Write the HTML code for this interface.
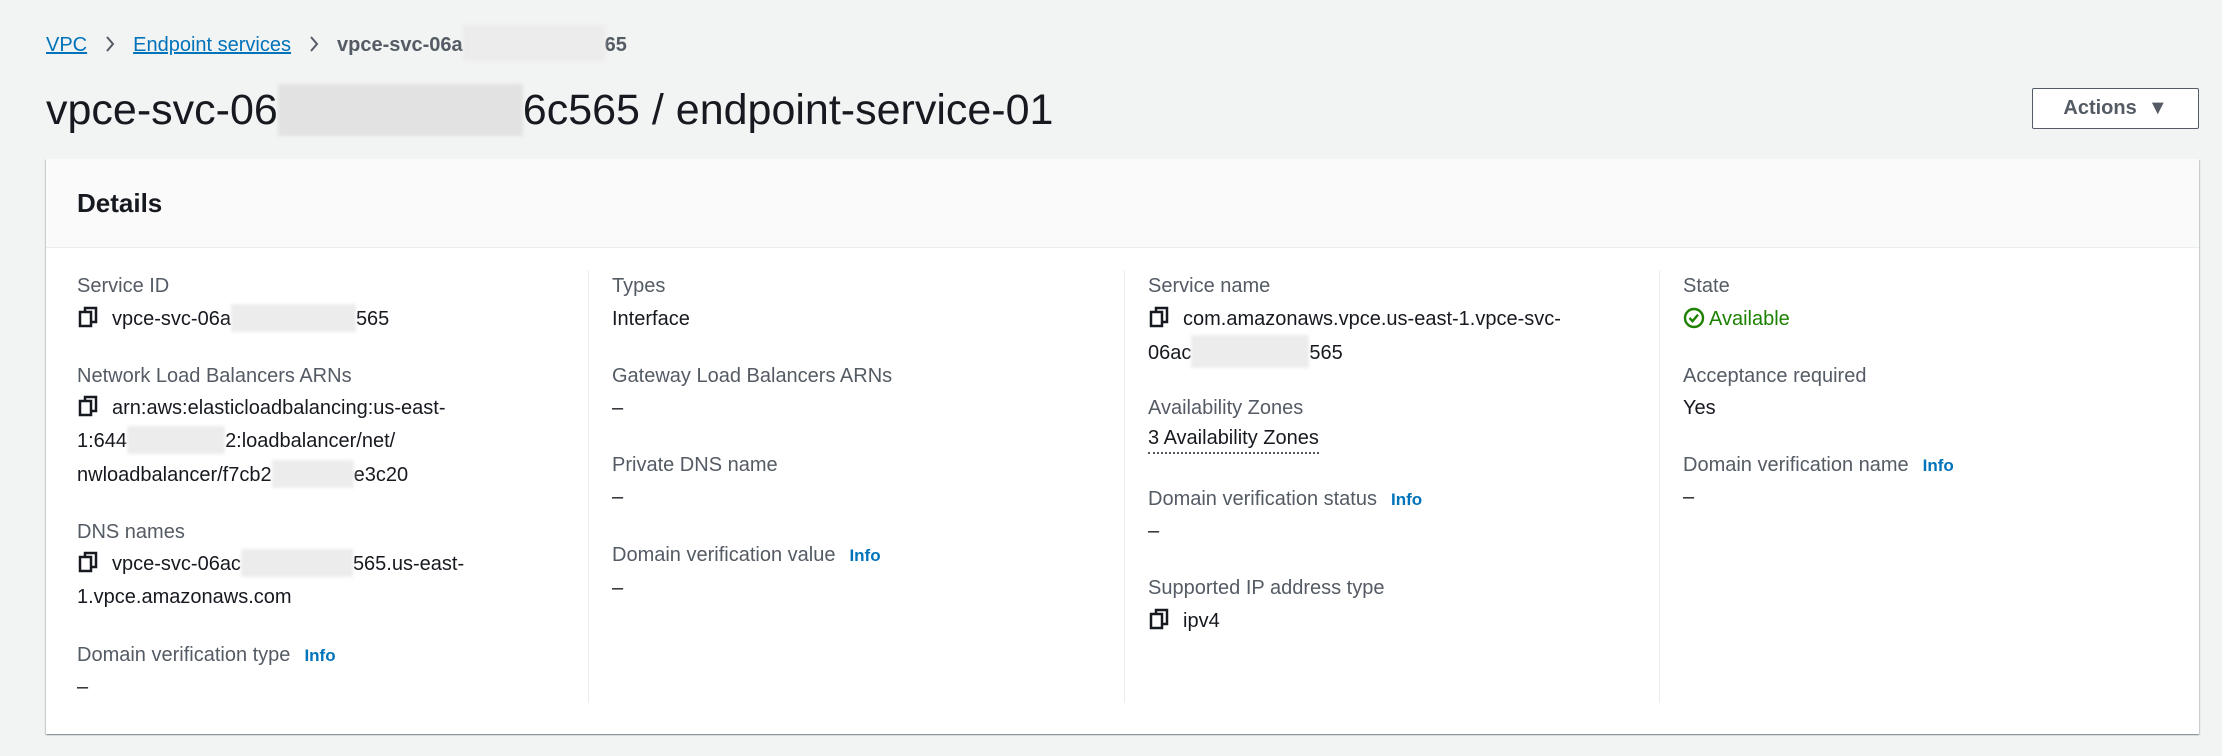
<!DOCTYPE html>
<html><head><meta charset="utf-8"><style>
body{margin:0;width:2222px;height:756px;background:#f2f3f3;font-family:"Liberation Sans",sans-serif;position:relative;overflow:hidden;color:#16191f}
.a{position:absolute;white-space:nowrap}
.bc{font-size:20px;top:25px;line-height:26px}
.bc a{color:#0073bb;text-decoration:underline}
.t{font-size:43px;top:84px;left:46px;color:#16191f}
.btn{left:2032px;top:88px;width:167px;height:41px;border:1px solid #545b64;border-radius:2px;background:#fff;box-sizing:border-box;font-weight:bold;font-size:20px;color:#545b64;line-height:39px;text-align:center}
.panel{left:46px;top:159px;width:2153px;height:575px;background:#fff;box-shadow:0 1px 1px 0 rgba(0,28,36,.3),1px 1px 1px 0 rgba(0,28,36,.15),-1px 1px 1px 0 rgba(0,28,36,.15);position:absolute}
.hd{position:absolute;left:0;top:0;width:100%;height:88px;background:#fafafa;border-bottom:1px solid #eaeded}
.dv{position:absolute;top:270px;width:1px;height:433px;background:#eaeded}
.l,.v{font-size:20px;line-height:32px}
.l{color:#545b64}
.v{color:#16191f}
.i{color:#0073bb;font-weight:bold;font-size:17px;margin-left:14px}
.b{display:inline-block;background:#ececec;height:28px;vertical-align:-7px;filter:blur(1.5px)}
.cp{display:inline-block;width:22px;vertical-align:-3px;margin-right:13px}
.sep{display:inline-block;margin:0 18px;vertical-align:-2px}
</style></head><body>
<div class="a bc" style="left:46px"><a>VPC</a><svg class="sep" width="10" height="18" viewBox="0 0 10 18"><path d="M2 2l6 7-6 7" fill="none" stroke="#545b64" stroke-width="2"/></svg><a>Endpoint services</a><svg class="sep" width="10" height="18" viewBox="0 0 10 18"><path d="M2 2l6 7-6 7" fill="none" stroke="#545b64" stroke-width="2"/></svg><span style="color:#545b64;font-weight:bold">vpce-svc-06a<span class="b" style="width:142px;height:36px;vertical-align:-10px"></span>65</span></div>
<div class="a t">vpce-svc-06<span class="b" style="width:245px;height:52px;vertical-align:-12px;background:#e2e2e2"></span>6c565 / endpoint-service-01</div>
<div class="a btn">Actions&nbsp;&nbsp;▼</div>
<div class="panel"><div class="hd"></div>
<div class="a" style="left:31px;top:29px;font-size:26px;font-weight:bold">Details</div></div>
<div class="dv" style="left:588px"></div><div class="dv" style="left:1124px"></div><div class="dv" style="left:1659px"></div>

<!-- col1 -->
<div class="a l" style="left:77px;top:270px">Service ID</div>
<div class="a v" style="left:77px;top:303px"><svg class="cp" width="20" height="22" viewBox="0 0 20 22"><rect x="7" y="2" width="11" height="14" fill="none" stroke="#16191f" stroke-width="2.5"/><rect x="2" y="6" width="11" height="14" fill="#fff" stroke="#16191f" stroke-width="2.5"/></svg>vpce-svc-06a<span class="b" style="width:125px"></span>565</div>
<div class="a l" style="left:77px;top:360px">Network Load Balancers ARNs</div>
<div class="a v" style="left:77px;top:392px"><svg class="cp" width="20" height="22" viewBox="0 0 20 22"><rect x="7" y="2" width="11" height="14" fill="none" stroke="#16191f" stroke-width="2.5"/><rect x="2" y="6" width="11" height="14" fill="#fff" stroke="#16191f" stroke-width="2.5"/></svg>arn:aws:elasticloadbalancing:us-east-</div>
<div class="a v" style="left:77px;top:425px">1:644<span class="b" style="width:98px"></span>2:loadbalancer/net/</div>
<div class="a v" style="left:77px;top:459px">nwloadbalancer/f7cb2<span class="b" style="width:82px"></span>e3c20</div>
<div class="a l" style="left:77px;top:516px">DNS names</div>
<div class="a v" style="left:77px;top:548px"><svg class="cp" width="20" height="22" viewBox="0 0 20 22"><rect x="7" y="2" width="11" height="14" fill="none" stroke="#16191f" stroke-width="2.5"/><rect x="2" y="6" width="11" height="14" fill="#fff" stroke="#16191f" stroke-width="2.5"/></svg>vpce-svc-06ac<span class="b" style="width:112px"></span>565.us-east-</div>
<div class="a v" style="left:77px;top:581px">1.vpce.amazonaws.com</div>
<div class="a l" style="left:77px;top:639px">Domain verification type<span class="i">Info</span></div>
<div class="a v" style="left:77px;top:671px">–</div>

<!-- col2 -->
<div class="a l" style="left:612px;top:270px">Types</div>
<div class="a v" style="left:612px;top:303px">Interface</div>
<div class="a l" style="left:612px;top:360px">Gateway Load Balancers ARNs</div>
<div class="a v" style="left:612px;top:392px">–</div>
<div class="a l" style="left:612px;top:449px">Private DNS name</div>
<div class="a v" style="left:612px;top:481px">–</div>
<div class="a l" style="left:612px;top:539px">Domain verification value<span class="i">Info</span></div>
<div class="a v" style="left:612px;top:572px">–</div>

<!-- col3 -->
<div class="a l" style="left:1148px;top:270px">Service name</div>
<div class="a v" style="left:1148px;top:303px"><svg class="cp" width="20" height="22" viewBox="0 0 20 22"><rect x="7" y="2" width="11" height="14" fill="none" stroke="#16191f" stroke-width="2.5"/><rect x="2" y="6" width="11" height="14" fill="#fff" stroke="#16191f" stroke-width="2.5"/></svg>com.amazonaws.vpce.us-east-1.vpce-svc-</div>
<div class="a v" style="left:1148px;top:335px">06ac<span class="b" style="width:118px;height:33px;vertical-align:-9px"></span>565</div>
<div class="a l" style="left:1148px;top:392px">Availability Zones</div>
<div class="a v" style="left:1148px;top:425px;border-bottom:2px dotted #545b64;line-height:27px">3 Availability Zones</div>
<div class="a l" style="left:1148px;top:483px">Domain verification status<span class="i">Info</span></div>
<div class="a v" style="left:1148px;top:515px">–</div>
<div class="a l" style="left:1148px;top:572px">Supported IP address type</div>
<div class="a v" style="left:1148px;top:605px"><svg class="cp" width="20" height="22" viewBox="0 0 20 22"><rect x="7" y="2" width="11" height="14" fill="none" stroke="#16191f" stroke-width="2.5"/><rect x="2" y="6" width="11" height="14" fill="#fff" stroke="#16191f" stroke-width="2.5"/></svg>ipv4</div>

<!-- col4 -->
<div class="a l" style="left:1683px;top:270px">State</div>
<div class="a v" style="left:1683px;top:303px;color:#1d8102"><svg width="22" height="22" viewBox="0 0 22 22" style="vertical-align:-4px;margin-right:4px"><circle cx="11" cy="11" r="9" fill="none" stroke="#1d8102" stroke-width="2.4"/><path d="M6.5 11l3 3.2 5.5-6.5" fill="none" stroke="#1d8102" stroke-width="2.4"/></svg>Available</div>
<div class="a l" style="left:1683px;top:360px">Acceptance required</div>
<div class="a v" style="left:1683px;top:392px">Yes</div>
<div class="a l" style="left:1683px;top:449px">Domain verification name<span class="i">Info</span></div>
<div class="a v" style="left:1683px;top:481px">–</div>
</body></html>
